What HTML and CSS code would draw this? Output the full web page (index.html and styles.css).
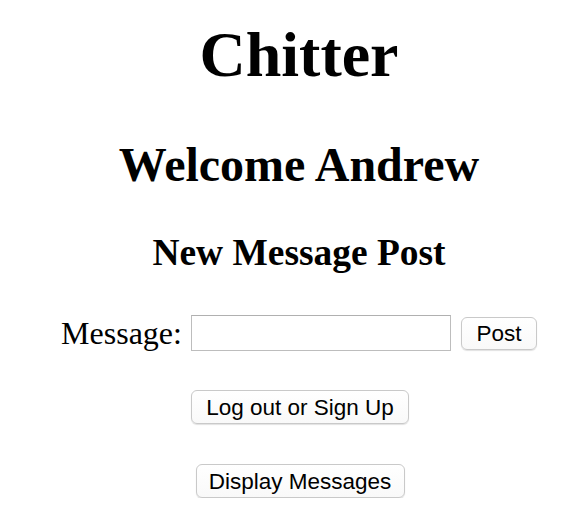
FILE: index.html
```html
<!DOCTYPE html>
<html>
<head>
<meta charset="utf-8">
<title>Chitter</title>
<link rel="stylesheet" href="styles.css">
</head>
<body>
<main class="page">
  <h1 class="title">Chitter</h1>
  <h2 class="welcome">Welcome Andrew</h2>
  <h3 class="subtitle">New Message Post</h3>
  <form class="post-form">
    <label class="label" for="msg">Message:</label>
    <input class="field" id="msg" type="text">
    <button class="btn btn-post" type="button">Post</button>
  </form>
  <button class="btn btn-logout" type="button">Log out or Sign Up</button>
  <button class="btn btn-display" type="button">Display Messages</button>
</main>
</body>
</html>
```
FILE: styles.css
```css
html, body {
  margin: 0;
  padding: 0;
  background: #ffffff;
}

.page {
  display: flex;
  flex-direction: column;
  align-items: center;
  padding-left: 12px;
  font-family: "Liberation Serif", "Times New Roman", serif;
  color: #000;
}

.title {
  font-size: 64px;
  font-weight: bold;
  line-height: 74px;
  margin: 18px 0 0;
}

.welcome {
  font-size: 48px;
  font-weight: bold;
  line-height: 55px;
  margin: 45px 0 0;
}

.subtitle {
  font-size: 37.44px;
  font-weight: bold;
  line-height: 43px;
  margin: 39px 0 0;
}

.post-form {
  display: flex;
  align-items: center;
  margin-top: 41px;
  height: 36px;
}

.label {
  font-size: 32px;
  margin-right: 9px;
}

.field {
  box-sizing: border-box;
  width: 260px;
  height: 36px;
  margin: 0 10px 0 0;
  border: 1px solid #bdbdbd;
  border-top-color: #b0b0b0;
  background: #fff;
  padding: 0 4px;
}

.btn {
  box-sizing: border-box;
  font-family: "Liberation Sans", Arial, Helvetica, sans-serif;
  font-size: 22.5px;
  color: #000;
  background: linear-gradient(#ffffff, #f9f9f9);
  border: 1px solid #c9c9c9;
  border-radius: 6px;
  box-shadow: 0 1px 1px rgba(0, 0, 0, 0.12);
  height: 33px;
  padding: 0 13px;
  line-height: 31px;
  margin: 0;
}

.btn-post {
  width: 76px;
  padding: 0;
}

.btn-logout {
  margin: 39px 0 0 2px;
  width: 218px;
  height: 34px;
  padding: 0;
}

.btn-display {
  margin: 40px 0 0 2px;
  width: 209px;
  height: 34px;
  padding: 0;
}
```
